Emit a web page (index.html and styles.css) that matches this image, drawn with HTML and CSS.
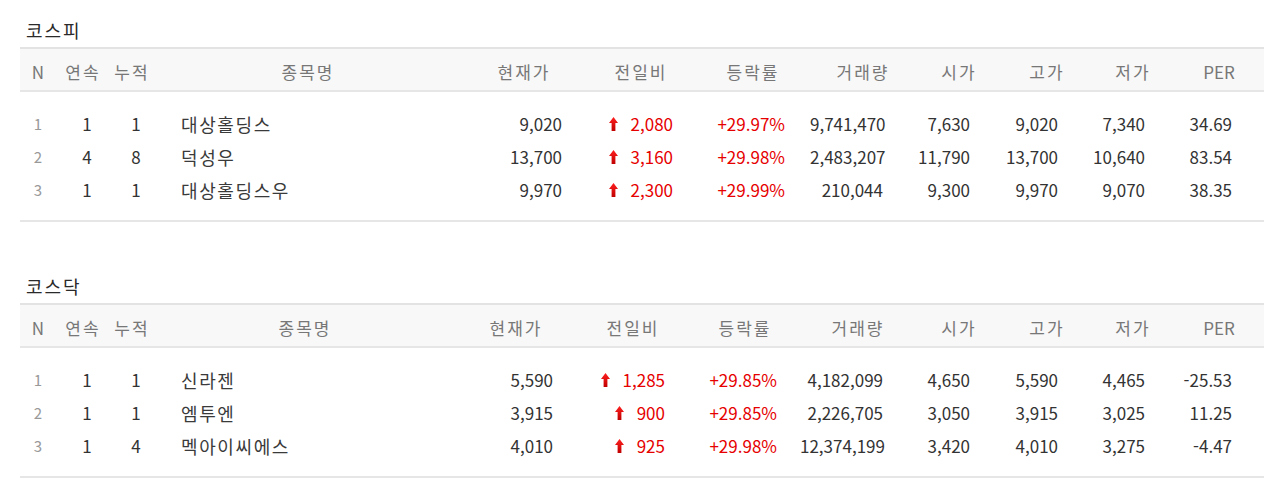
FILE: index.html
```html
<!DOCTYPE html>
<html lang="ko">
<head>
<meta charset="utf-8">
<title>상한가</title>
<link rel="stylesheet" href="styles.css">
</head>
<body>
<div class="page">
  <section class="market kospi">
    <h2 class="market-title">코스피</h2>
    <div class="board">
      <div class="row head">
        <div class="en">N</div><div>연속</div><div>누적</div><div>종목명</div><div>현재가</div><div>전일비</div><div>등락률</div><div>거래량</div><div>시가</div><div>고가</div><div>저가</div><div class="en">PER</div>
      </div>
      <div class="body">
        <div class="row item">
          <div class="no">1</div><div class="cnt">1</div><div class="cnt">1</div><div class="name">대상홀딩스</div><div class="num c5">9,020</div><div class="num c6 up"><svg class="arrow" viewBox="0 0 9 14" width="9" height="14"><defs><linearGradient id="g1" x1="0" y1="0" x2="0" y2="1"><stop offset="0" stop-color="#ff2020"/><stop offset="1" stop-color="#c00000"/></linearGradient></defs><polygon points="4.5,0 9,6 6.4,6 6.4,14 2.6,14 2.6,6 0,6" fill="url(#g1)"/></svg>2,080</div><div class="num c7 up">+29.97%</div><div class="num c8">9,741,470</div><div class="num c9">7,630</div><div class="num c10">9,020</div><div class="num c11">7,340</div><div class="num c12">34.69</div>
        </div>
        <div class="row item">
          <div class="no">2</div><div class="cnt">4</div><div class="cnt">8</div><div class="name">덕성우</div><div class="num c5">13,700</div><div class="num c6 up"><svg class="arrow" viewBox="0 0 9 14" width="9" height="14"><polygon points="4.5,0 9,6 6.4,6 6.4,14 2.6,14 2.6,6 0,6" fill="url(#g1)"/></svg>3,160</div><div class="num c7 up">+29.98%</div><div class="num c8">2,483,207</div><div class="num c9">11,790</div><div class="num c10">13,700</div><div class="num c11">10,640</div><div class="num c12">83.54</div>
        </div>
        <div class="row item">
          <div class="no">3</div><div class="cnt">1</div><div class="cnt">1</div><div class="name">대상홀딩스우</div><div class="num c5">9,970</div><div class="num c6 up"><svg class="arrow" viewBox="0 0 9 14" width="9" height="14"><polygon points="4.5,0 9,6 6.4,6 6.4,14 2.6,14 2.6,6 0,6" fill="url(#g1)"/></svg>2,300</div><div class="num c7 up">+29.99%</div><div class="num c8">210,044</div><div class="num c9">9,300</div><div class="num c10">9,970</div><div class="num c11">9,070</div><div class="num c12">38.35</div>
        </div>
      </div>
    </div>
  </section>

  <section class="market kosdaq">
    <h2 class="market-title">코스닥</h2>
    <div class="board">
      <div class="row head">
        <div class="en">N</div><div>연속</div><div>누적</div><div>종목명</div><div>현재가</div><div>전일비</div><div>등락률</div><div>거래량</div><div>시가</div><div>고가</div><div>저가</div><div class="en">PER</div>
      </div>
      <div class="body">
        <div class="row item">
          <div class="no">1</div><div class="cnt">1</div><div class="cnt">1</div><div class="name">신라젠</div><div class="num c5">5,590</div><div class="num c6 up"><svg class="arrow" viewBox="0 0 9 14" width="9" height="14"><polygon points="4.5,0 9,6 6.4,6 6.4,14 2.6,14 2.6,6 0,6" fill="url(#g1)"/></svg>1,285</div><div class="num c7 up">+29.85%</div><div class="num c8">4,182,099</div><div class="num c9">4,650</div><div class="num c10">5,590</div><div class="num c11">4,465</div><div class="num c12">-25.53</div>
        </div>
        <div class="row item">
          <div class="no">2</div><div class="cnt">1</div><div class="cnt">1</div><div class="name">엠투엔</div><div class="num c5">3,915</div><div class="num c6 up"><svg class="arrow" viewBox="0 0 9 14" width="9" height="14"><polygon points="4.5,0 9,6 6.4,6 6.4,14 2.6,14 2.6,6 0,6" fill="url(#g1)"/></svg>900</div><div class="num c7 up">+29.85%</div><div class="num c8">2,226,705</div><div class="num c9">3,050</div><div class="num c10">3,915</div><div class="num c11">3,025</div><div class="num c12">11.25</div>
        </div>
        <div class="row item">
          <div class="no">3</div><div class="cnt">1</div><div class="cnt">4</div><div class="name">멕아이씨에스</div><div class="num c5">4,010</div><div class="num c6 up"><svg class="arrow" viewBox="0 0 9 14" width="9" height="14"><polygon points="4.5,0 9,6 6.4,6 6.4,14 2.6,14 2.6,6 0,6" fill="url(#g1)"/></svg>925</div><div class="num c7 up">+29.98%</div><div class="num c8">12,374,199</div><div class="num c9">3,420</div><div class="num c10">4,010</div><div class="num c11">3,275</div><div class="num c12">-4.47</div>
        </div>
      </div>
    </div>
  </section>
</div>
</body>
</html>
```

FILE: styles.css
```css
* { box-sizing: border-box; }
html, body { margin: 0; padding: 0; background: #fff; }
body {
  font-family: "Noto Sans CJK KR", "Open Sans", sans-serif;
  font-size: 17px;
  color: #333;
}
.page {
  padding: 20px 0 0 20px;
  display: flex;
  flex-direction: column;
  gap: 54px;
}
.market-title {
  margin: 0 0 7px;
  padding-left: 6px;
  font-size: 18px;
  font-weight: normal;
  letter-spacing: 2px;
  line-height: 20px;
  color: #2a2a2a;
}
.board {
  width: 1244px;
  border-bottom: 2px solid #e6e6e6;
}
.kospi { --cols: 36px 52px 46px 306px 126px 108px 116px 104px 88px 88px 84px 90px; --p5: 24px; --p6: 21px; --p7: 25px; }
.kosdaq { --cols: 36px 52px 46px 300px 122px 112px 112px 114px 88px 88px 84px 90px; --p5: 23px; --p6: 23px; --p7: 23px; }
.row {
  display: grid;
  grid-template-columns: var(--cols);
  align-items: center;
}
.head {
  height: 45px;
  padding-top: 3px;
  background: #f8f8f8;
  border-top: 2px solid #e3e3e3;
  border-bottom: 2px solid #e6e6e6;
  color: #777;
  text-align: center;
  letter-spacing: 2px;
  text-indent: 2px;
}
.head .en { letter-spacing: 0; text-indent: 0; }
.body { padding: 15px 0 14px; }
.item { height: 33px; white-space: nowrap; }
.no { text-align: center; color: #999; font-size: 15px; }
.cnt { text-align: center; padding-left: 10px; }
.name { padding-left: 27px; font-size: 18px; letter-spacing: 1.6px; color: #3a3a3a; }
.num { text-align: right; }
.c5 { padding-right: var(--p5); }
.c6 { padding-right: var(--p6); }
.c7 { padding-right: var(--p7); }
.c8 { padding-right: 31px; }
.c9 { padding-right: 32px; }
.c10 { padding-right: 32px; }
.c11 { padding-right: 29px; }
.c12 { padding-right: 32px; }
.up { color: #e60000; }
.arrow {
  display: inline-block;
  vertical-align: 0;
  margin-right: 13px;
}
```
